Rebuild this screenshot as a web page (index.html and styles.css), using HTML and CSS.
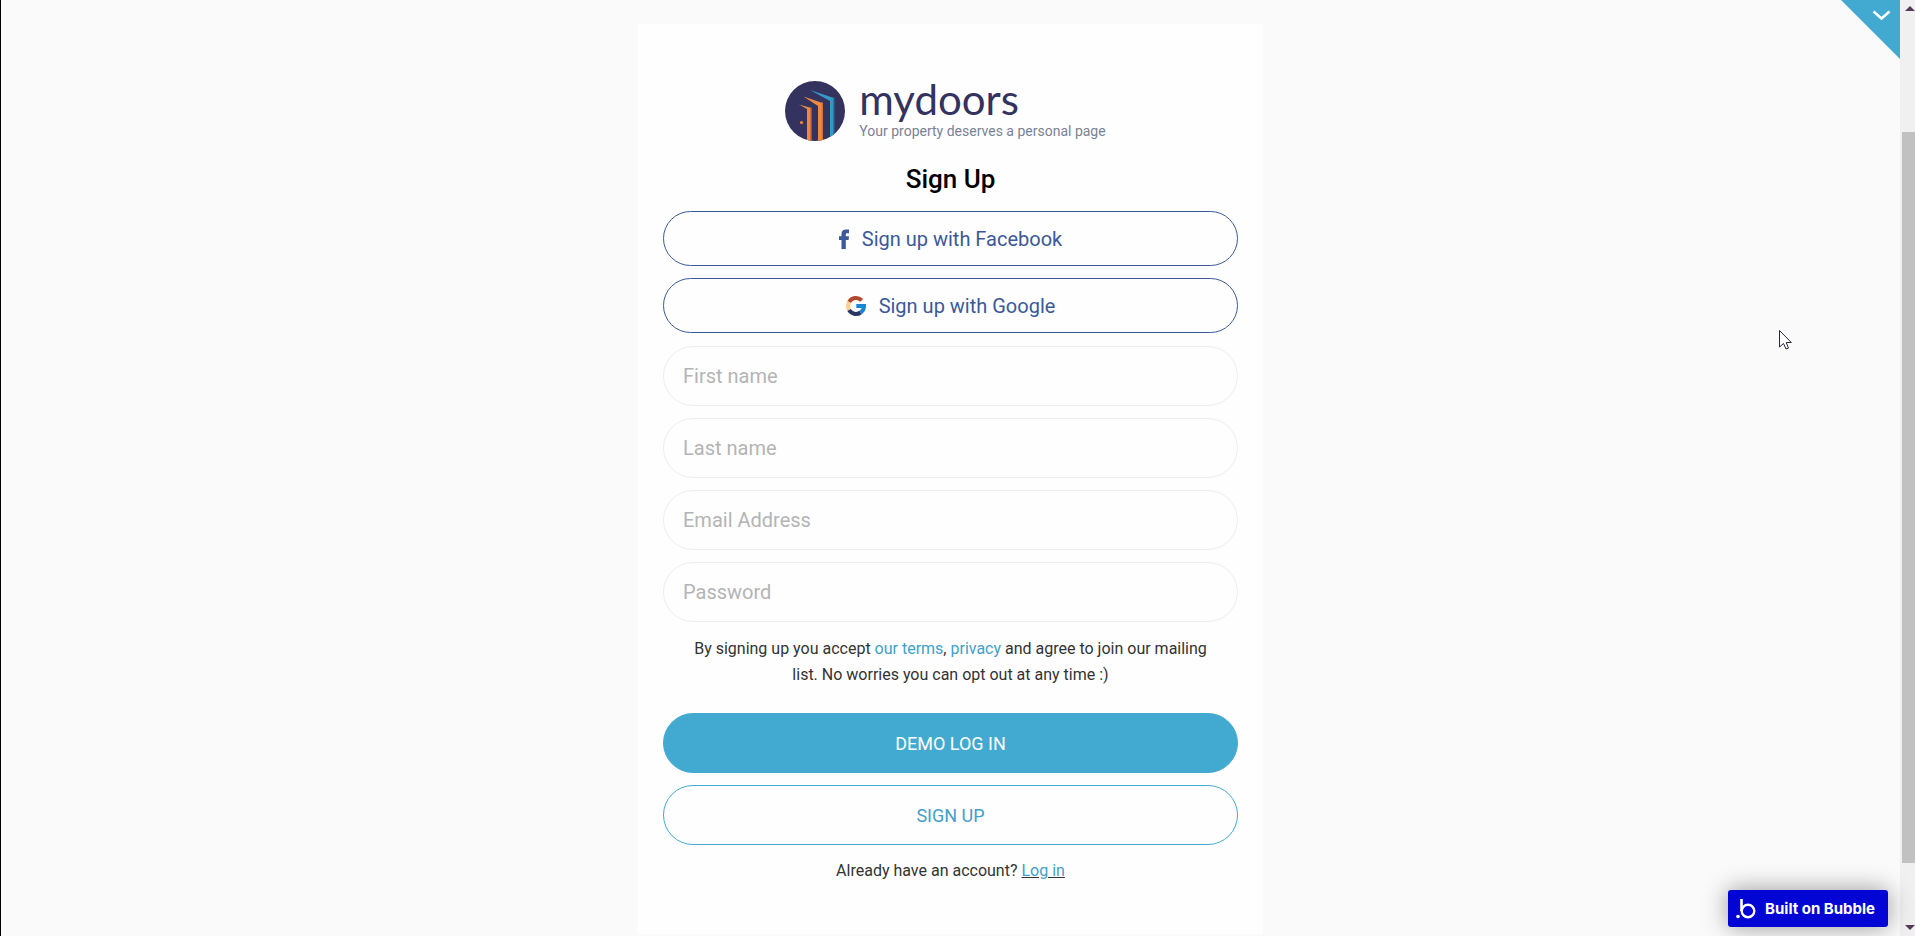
FILE: index.html
```
<!DOCTYPE html>
<html lang="en">
<head>
    <meta charset="UTF-8">
    <meta name="viewport" content="width=device-width, initial-scale=1.0">
    <title>mydoors - Sign Up</title>
    <link rel="stylesheet" href="styles.css">
</head>
<body>
    <div class="page">
        <main class="card">
            <div class="brand">
                <svg class="brand-logo" viewBox="0 0 60 60" aria-hidden="true">
                    <defs>
                        <clipPath id="disc"><circle cx="30" cy="30" r="30"/></clipPath>
                    </defs>
                    <g clip-path="url(#disc)">
                        <rect width="60" height="60" fill="#34325f"/>
                        <path d="M25 9L49 17V60H45V20Z" fill="#3398c4"/>
                        <path d="M48 16.500H49.500V60H48Z" fill="#2b74a2"/>
                        <path d="M18.500 15.500L37.500 22V60H33V25Z" fill="#ee8a40"/>
                        <path d="M36.500 21.500H38V60H36.500Z" fill="#cf733f"/>
                        <path d="M14 23.500L26.500 27V60H22V28Z" fill="#ee8a40"/>
                        <path d="M25.500 26.500H27V60H25.500Z" fill="#b9473a"/>
                        <circle cx="16.500" cy="41.500" r="1.600" fill="#ee8a40"/>
                    </g>
                </svg>
                <div class="brand-text">
                    <span class="brand-name">mydoors</span>
                    <span class="brand-tagline">Your property deserves a personal page</span>
                </div>
            </div>

            <h1 class="title">Sign Up</h1>

            <div class="socials">
                <button type="button" class="button social">
                    <svg width="10" height="20" viewBox="0 0 10 20" aria-hidden="true">
                        <path d="M2.500 20V11H0V7.200H2.500V5C2.500 1.800 4.300 .5 7 .5H10V4.200H8.200C7 4.200 6.800 4.600 6.800 5.500V7.200H10L9.600 11H6.800V20Z" fill="#3b5998"/>
                    </svg>
                    Sign up with Facebook
                </button>
                <button type="button" class="button social">
                    <svg width="20" height="20" viewBox="0 0 20 20" fill="none" stroke-width="4" aria-hidden="true">
                        <path d="M3.100 6A8 8 0 0 1 15.700 4.400" stroke="#b1492f"/>
                        <path d="M3.100 14A8 8 0 0 1 3.100 6" stroke="#ffd08f"/>
                        <path d="M14.600 16.500A8 8 0 0 1 3.100 14" stroke="#2a3562"/>
                        <path d="M10.300 10H18A8 8 0 0 1 14.600 16.500" stroke="#1785d3"/>
                    </svg>
                    Sign up with Google
                </button>
            </div>

            <form class="form">
                <input type="text" class="field" placeholder="First name" aria-label="First name">
                <input type="text" class="field" placeholder="Last name" aria-label="Last name">
                <input type="email" class="field" placeholder="Email Address" aria-label="Email Address">
                <input type="password" class="field" placeholder="Password" aria-label="Password">

                <p class="terms">By signing up you accept <a href="#">our terms</a>, <a href="#">privacy</a> and agree to join our mailing list. No worries you can opt out at any time :)</p>

                <button type="button" class="button primary">DEMO LOG IN</button>
                <button type="submit" class="button outline">SIGN UP</button>
            </form>

            <p class="login">Already have an account? <a href="#">Log in</a></p>
        </main>

        <button type="button" class="corner" aria-label="Open menu">
            <svg width="59" height="59" viewBox="0 0 59 59" aria-hidden="true">
                <path d="M0 0H59V59Z" fill="#42aad0"/>
                <path d="M32.500 11.500L40.500 18.500L48.500 11.500" fill="none" stroke="#fff" stroke-width="2.500"/>
            </svg>
        </button>

        <a class="bubble" href="#">
            <svg width="20" height="21" viewBox="0 0 20 21" aria-hidden="true">
                <circle cx="2" cy="18.500" r="1.800" fill="#fff"/>
                <path d="M5.500 1V13" stroke="#fff" stroke-width="2.600"/>
                <circle cx="12" cy="13" r="6.300" fill="none" stroke="#fff" stroke-width="2.400"/>
            </svg>
            Built on Bubble
        </a>

        <svg class="cursor" width="13" height="20" viewBox="0 0 13 20" aria-hidden="true">
            <path d="M.5 .5V17L4.500 13.500L7 19L9.500 18L7.200 12.500H12.300Z" fill="#fff" stroke="#28243c"/>
        </svg>
    </div>

    <div class="scrollbar">
        <span class="arrow up"></span>
        <span class="thumb"></span>
        <span class="arrow down"></span>
    </div>
</body>
</html>
```
FILE: styles.css
```
* {
    box-sizing: border-box;
}
body {
    display: flex;
    min-height: 100vh;
    margin: 0;
    background-color: #fafafa;
    font-family: Roboto, Arial, sans-serif;
    color: #333;
    overflow: hidden;
}
h1, p {
    margin: 0;
}
a {
    color: #429fca;
    text-decoration: none;
}

.page {
    position: relative;
    flex: 1;
    padding: 24px 16px 0;
    border-left: 1px solid #000;
}
.card {
    max-width: 625px;
    margin: 0 auto;
    padding: 57px 25px 50px;
    background-color: #fefefe;
}

/* Logo */
.brand {
    display: flex;
    justify-content: center;
    gap: 14px;
    padding-right: 10px;
}
.brand-logo {
    width: 60px;
    height: 60px;
}
.brand-text {
    display: flex;
    flex-direction: column;
}
.brand-name {
    font-family: Lato, sans-serif;
    font-size: 42px;
    line-height: 36px;
    color: #34325f;
}
.brand-tagline {
    padding-top: 4px;
    font-size: 14px;
    line-height: 20px;
    color: #7a8296;
}
.title {
    margin: 20px 0 14px;
    font-size: 26px;
    font-weight: 500;
    line-height: 36px;
    text-align: center;
    color: #000;
}

/* Form */
.socials,
.form {
    display: flex;
    flex-direction: column;
    gap: 12px;
}
.socials {
    margin-bottom: 13px;
}
.button {
    display: flex;
    align-items: center;
    justify-content: center;
    gap: 13px;
    width: 100%;
    height: 60px;
    padding: 0 20px;
    border: 1px solid #42aad0;
    border-radius: 30px;
    background: none;
    font-family: inherit;
    font-size: 18px;
    cursor: pointer;
}
.social {
    height: 55px;
    border-color: #3b5998;
    font-size: 20px;
    color: #3b5998;
}
.primary {
    background-color: #42aad0;
    color: #fff;
}
.outline {
    color: #429fca;
}
.field {
    width: 100%;
    height: 60px;
    padding: 0 19px;
    border: 1px solid #ededed;
    border-radius: 30px;
    background: none;
    font-family: inherit;
    font-size: 20px;
    color: #333;
}
.field::placeholder {
    color: #b4b4b4;
}
.terms {
    padding: 2px 20px 13px;
    font-size: 16px;
    line-height: 26px;
    text-align: center;
}
.login {
    margin-top: 13px;
    font-size: 16px;
    line-height: 26px;
    text-align: center;
}
.login a {
    text-decoration: underline;
    text-decoration-color: #333;
}

/* Floating items */
.corner {
    position: absolute;
    top: 0;
    right: 0;
    padding: 0;
    border: none;
    background: none;
    cursor: pointer;
}
.corner svg {
    display: block;
}
.bubble {
    position: absolute;
    right: 12px;
    bottom: 9px;
    display: flex;
    align-items: center;
    gap: 9px;
    height: 37px;
    padding: 0 13px 0 8px;
    border-radius: 3px;
    background-color: #0205d3;
    box-shadow: 0 0 24px rgba(0, 0, 0, 0.4);
    font-family: Inter, sans-serif;
    font-size: 15px;
    font-weight: 700;
    color: #fff;
}
.cursor {
    position: absolute;
    top: 330px;
    right: 108px;
}

/* Scrollbar */
.scrollbar {
    display: flex;
    flex-direction: column;
    flex: 0 0 15px;
    padding: 6px 0 6px 2px;
    background-color: #f0f0f0;
}
.arrow {
    align-self: flex-end;
    border: 5px solid transparent;
}
.up {
    border-top: none;
    border-bottom-color: #573a5a;
}
.down {
    border-bottom: none;
    border-top-color: #573a5a;
}
.thumb {
    flex: 1;
    margin: 121px 0 62px;
    background-color: #c1c1c1;
}
```
